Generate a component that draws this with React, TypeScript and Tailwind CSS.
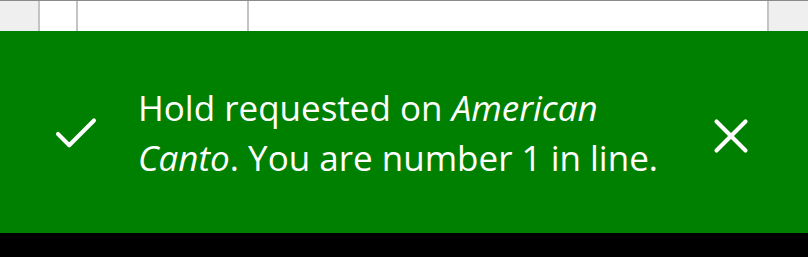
import { Check, X } from "lucide-react";

export default function App() {
  return (
    <div className="flex h-[257px] w-[808px] flex-col bg-black font-['Open_Sans',sans-serif]">
      {/* table header strip peeking above the toast */}
      <div className="flex h-[31px] border-t border-[#8a8a8a] bg-white">
        <div className="w-[40px] border-r-2 border-[#c4c4c4] bg-[#efefef]" />
        <div className="w-[38px] border-r-2 border-[#c4c4c4]" />
        <div className="w-[171px] border-r-2 border-[#c4c4c4]" />
        <div className="flex-1 border-r-2 border-[#c4c4c4]" />
        <div className="w-[39px] bg-[#efefef]" />
      </div>

      {/* success toast */}
      <div className="flex h-[202px] items-center bg-[#008000] text-white">
        <div className="flex w-[138px] pl-[49px] pt-[4px]">
          <Check className="h-[54px] w-[54px]" strokeWidth={1.8} />
        </div>
        <p className="w-[540px] pt-[2px] text-[35px] leading-[50px]">
          Hold requested on <em>American Canto</em>. You are number 1 in line.
        </p>
        <button className="ml-[24px] flex h-[58px] w-[58px] items-center justify-center pt-[8px]">
          <X className="h-[58px] w-[58px]" strokeWidth={1.7} />
        </button>
      </div>
    </div>
  );
}
